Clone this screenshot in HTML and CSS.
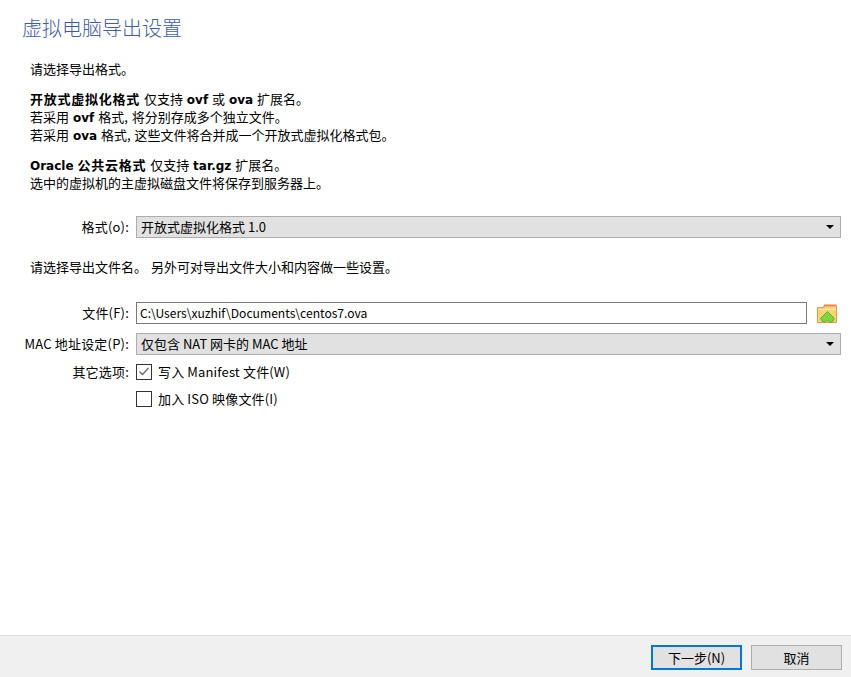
FILE: index.html
```html
<!DOCTYPE html>
<html lang="zh-CN">
<head>
<meta charset="utf-8">
<title>虚拟电脑导出设置</title>
<link rel="stylesheet" href="styles.css">
</head>
<body>
<div class="page">
  <main class="content">
    <h1 class="title">虚拟电脑导出设置</h1>
    <div class="body">
      <p class="para">请选择导出格式。</p>
      <p class="para"><b class="zh">开放式虚拟化格式</b> 仅支持 <b>ovf</b> 或 <b>ova</b> 扩展名。<br>若采用 <b>ovf</b> 格式, 将分别存成多个独立文件。<br>若采用 <b>ova</b> 格式, 这些文件将合并成一个开放式虚拟化格式包。</p>
      <p class="para"><b>Oracle</b> <b class="zh">公共云格式</b> 仅支持 <b>tar.gz</b> 扩展名。<br>选中的虚拟机的主虚拟磁盘文件将保存到服务器上。</p>
      <div class="row row-format">
        <span class="label">格式(o):</span>
        <div class="select"><span>开放式虚拟化格式 1.0</span><i class="arrow"></i></div>
      </div>
      <p class="para para-file">请选择导出文件名。 另外可对导出文件大小和内容做一些设置。</p>
      <div class="row row-file">
        <span class="label">文件(F):</span>
        <div class="input">C:\Users\xuzhif\Documents\centos7.ova</div>
        <svg class="folder" width="21" height="21" viewBox="0 0 21 21">
          <path d="M7 1.500h11.500a1 1 0 0 1 1 1V5H6z" fill="#ee7a45"/>
          <path d="M.5 4.500h6l1.500-1.500h11.500v16.500H.5z" fill="#fdd273" stroke="#e69a45"/>
          <path d="M1 6h18v1H1z" fill="#ffe9a8"/>
          <path d="M10.500 8.500l7 7-2.500 3.500h-2.500l-2-2-2 2H6l-2.500-3.500z" fill="#7ed63f" stroke="#5cae2c"/>
        </svg>
      </div>
      <div class="row row-mac">
        <span class="label">MAC 地址设定(P):</span>
        <div class="select"><span>仅包含 NAT 网卡的 MAC 地址</span><i class="arrow"></i></div>
      </div>
      <div class="row row-check">
        <span class="label">其它选项:</span>
        <div class="check-item">
          <span class="box"><svg width="14" height="14" viewBox="0 0 14 14"><path d="M2.500 6.500l3 3 6-6.500" fill="none" stroke="#666" stroke-width="1.300"/></svg></span>
          <span class="check-text">写入 Manifest 文件(W)</span>
        </div>
      </div>
      <div class="row row-check2">
        <span class="label"></span>
        <div class="check-item">
          <span class="box"></span>
          <span class="check-text">加入 ISO 映像文件(I)</span>
        </div>
      </div>
    </div>
  </main>
  <footer class="footer">
    <div class="btn btn-default">下一步(N)</div>
    <div class="btn">取消</div>
  </footer>
</div>
</body>
</html>
```
FILE: styles.css
```css
* { box-sizing: border-box; }
html, body { margin: 0; height: 100%; }
body {
  background: #fff;
  color: #000;
  font-family: "Noto Sans CJK SC", "DejaVu Sans", sans-serif;
  font-size: 13px;
  line-height: 18px;
}
.page { height: 100vh; display: flex; flex-direction: column; }
.content { flex: 1; padding: 14px 10px 0 22px; }
.title {
  margin: 0;
  font-size: 20px;
  line-height: 27px;
  font-weight: 300;
  color: #3f5cab;
}
.body { padding-left: 8px; }
.para { margin: 0; word-spacing: 1px; }
.para b {
  font-family: "DejaVu Sans", "Noto Sans CJK SC", sans-serif;
  font-size: 12px;
  line-height: 1;
}
.para b.zh {
  font-family: "Noto Sans CJK SC", sans-serif;
  font-size: 13px;
  letter-spacing: 0.750px;
}
.body > .para:nth-child(1) { margin-top: 19px; }
.body > .para:nth-child(2) { margin-top: 12px; }
.body > .para:nth-child(3) { margin-top: 12px; }
.para-file { margin-top: 20px; }
.row {
  display: grid;
  grid-template-columns: 121px 1fr;
  column-gap: 7px;
  align-items: center;
  margin-left: -22px;
}
.row-format { margin-top: 24px; }
.row-file { margin-top: 26px; grid-template-columns: 121px 1fr 27px; }
.row-mac { margin-top: 9px; }
.row-check { margin-top: 8px; }
.row-check2 { margin-top: 9px; }
.label { text-align: right; white-space: nowrap; letter-spacing: 0.200px; }
.check-text { letter-spacing: 0.150px; }
.select {
  height: 22px;
  background: #e1e1e1;
  border: 1px solid #adadad;
  padding: 0 6px 0 4px;
  display: flex;
  align-items: center;
  justify-content: space-between;
}
.arrow {
  width: 0; height: 0;
  border-left: 4px solid transparent;
  border-right: 4px solid transparent;
  border-top: 4px solid #000;
}
.input {
  height: 22px;
  border: 1px solid #7a7a7a;
  padding: 0 3px;
  line-height: 20px;
  font-size: 12.100px;
}
.folder { display: block; margin-left: 3px; }
.check-item { display: flex; align-items: center; gap: 6px; height: 18px; }
.box {
  width: 16px; height: 16px;
  border: 1px solid #333;
  background: #fff;
  display: flex;
  align-items: center;
  justify-content: center;
}
.footer {
  height: 42px;
  background: #f0f0f0;
  border-top: 1px solid #dfdfdf;
  display: flex;
  justify-content: flex-end;
  gap: 9px;
  padding: 9px 9px 0 0;
}
.btn {
  width: 91px; height: 25px;
  background: #e1e1e1;
  border: 1px solid #adadad;
  text-align: center;
  line-height: 23px;
}
.btn-default { border: 2px solid #0078d7; line-height: 21px; }
```
